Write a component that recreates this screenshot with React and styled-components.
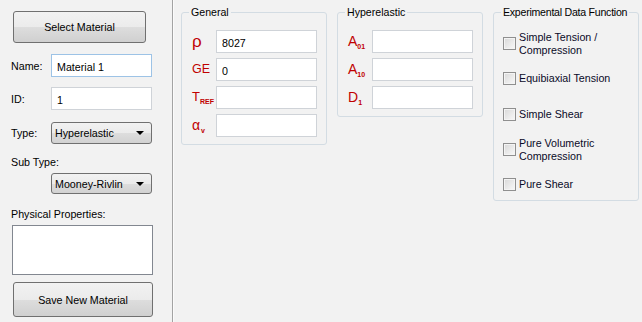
import React from 'react';
import styled, { createGlobalStyle } from 'styled-components';

const GlobalStyle = createGlobalStyle`
	html, body {
		margin: 0;
		padding: 0;
		background: #f2f2f2;
	}
	body {
		font-family: "Liberation Sans", Arial, sans-serif;
		font-size: 10.7px;
		color: #000;
	}
`;

const Window = styled.div`
	display: flex;
	width: 642px;
	height: 322px;
	background: #f2f2f2;
	overflow: hidden;
`;

const Sidebar = styled.div`
	display: flex;
	flex-direction: column;
	width: 173px;
	flex-shrink: 0;
	border-right: 1px solid #a3a3a3;
	box-shadow: 1px 0 0 #fbfbfb;
	box-sizing: border-box;
	padding-top: 11px;
`;

const Button = styled.button`
	width: ${({ wide }) => (wide ? '140px' : '133px')};
	height: ${({ wide }) => (wide ? '35px' : '32px')};
	margin-left: 13px;
	margin-top: ${({ top }) => top || 0}px;
	border: 1px solid #707070;
	border-radius: 3px;
	background: linear-gradient(#f2f2f2 0%, #ebebeb 50%, #dddddd 51%, #d0d0d0 100%);
	font-family: inherit;
	font-size: 10.7px;
	color: #000;
	padding: 0;
`;

const FieldRow = styled.div`
	display: flex;
	align-items: center;
	margin-top: ${({ top }) => top}px;
`;

const SideLabel = styled.span`
	width: 40px;
	padding-left: 11px;
	flex-shrink: 0;
`;

const TextBox = styled.input`
	box-sizing: border-box;
	width: 101px;
	height: 23px;
	border: 1px solid ${({ focused }) => (focused ? '#9dc3e6' : '#cfd3d8')};
	background: #fff;
	font-family: inherit;
	font-size: 10.7px;
	color: #000;
	padding: 2px 5px 0;
	margin: 0;
	outline: none;
`;

const Combo = styled.div`
	box-sizing: border-box;
	display: flex;
	align-items: center;
	justify-content: space-between;
	width: 101px;
	height: ${({ h }) => h || 22}px;
	margin-left: ${({ left }) => left || 0}px;
	margin-top: ${({ top }) => top || 0}px;
	border: 1px solid #707070;
	border-radius: 3px;
	background: linear-gradient(#f2f2f2 0%, #ebebeb 50%, #dddddd 51%, #d2d2d2 100%);
	padding: 0 7px 0 3px;
`;

const Arrow = styled.span`
	width: 0;
	height: 0;
	border-left: 4px solid transparent;
	border-right: 4px solid transparent;
	border-top: 4px solid #000;
`;

const PlainLabel = styled.div`
	padding-left: 11px;
	margin-top: ${({ top }) => top}px;
`;

const TextArea = styled.div`
	box-sizing: border-box;
	width: 141px;
	height: 50px;
	margin: 5px 0 0 12px;
	border: 1px solid #828790;
	background: #fff;
`;

const Main = styled.div`
	display: flex;
	align-items: flex-start;
	gap: 10px;
	padding: 5px 0 0 8px;
`;

const Group = styled.fieldset`
	box-sizing: border-box;
	width: 146px;
	height: ${({ h }) => h}px;
	margin: 0;
	padding: 11px 9px 0 9px;
	border: 1px solid #d3dce3;
	border-radius: 3px;
	min-width: 0;
`;

const Legend = styled.legend`
	padding: 1px 2px 0;
	margin-left: -2px;
	line-height: 13px;
	font-weight: normal;
	font-size: 10.6px;
	white-space: nowrap;
	letter-spacing: ${({ tight }) => (tight ? '-0.25px' : '0')};
`;

const PropRows = styled.div`
	display: flex;
	flex-direction: column;
	gap: 5px;
`;

const PropRow = styled.div`
	display: flex;
	align-items: center;
	justify-content: space-between;
`;

const Symbol = styled.span`
	color: #c00000;
	font-size: ${({ size }) => size || 12}px;
	line-height: 1;
	white-space: nowrap;
	padding-left: 1px;
`;

const Sub = styled.span`
	font-size: 7px;
	font-weight: bold;
	vertical-align: -3px;
	margin-left: ${({ gap }) => gap || 0}px;
`;

const CheckList = styled.div`
	display: flex;
	flex-direction: column;
	margin-top: -4px;
`;

const CheckRow = styled.label`
	display: flex;
	align-items: center;
	height: 35.3px;
	line-height: 13px;
	color: #0a0a28;
`;

const Box = styled.span`
	box-sizing: border-box;
	width: 13px;
	height: 13px;
	flex-shrink: 0;
	margin-right: 3px;
	border: 1px solid #8f8f8f;
	background: linear-gradient(135deg, #d8d8d8 0%, #ececec 60%, #f8f8f8 100%);
	box-shadow: inset 0 0 0 1px #f4f4f4;
`;

const general = [
	{ key: 'rho', symbol: <Symbol size={17}>ρ</Symbol>, value: '8027' },
	{ key: 'ge', symbol: <Symbol size={12.5}>GE</Symbol>, value: '0' },
	{ key: 'tref', symbol: <Symbol size={13}>T<Sub>REF</Sub></Symbol>, value: '' },
	{ key: 'alpha', symbol: <Symbol size={14}>α<Sub gap={1}>v</Sub></Symbol>, value: '' },
];

const hyper = [
	{ key: 'a01', symbol: <Symbol size={14}>A<Sub>01</Sub></Symbol> },
	{ key: 'a10', symbol: <Symbol size={14}>A<Sub>10</Sub></Symbol> },
	{ key: 'd1', symbol: <Symbol size={14}>D<Sub>1</Sub></Symbol> },
];

const experiments = [
	['Simple Tension /', 'Compression'],
	['Equibiaxial Tension'],
	['Simple Shear'],
	['Pure Volumetric', 'Compression'],
	['Pure Shear'],
];

export default function App() {
	return (
		<Window>
			<GlobalStyle />
			<Sidebar>
				<Button>Select Material</Button>
				<FieldRow top={11}>
					<SideLabel>Name:</SideLabel>
					<TextBox focused defaultValue="Material 1" />
				</FieldRow>
				<FieldRow top={10}>
					<SideLabel>ID:</SideLabel>
					<TextBox defaultValue="1" />
				</FieldRow>
				<FieldRow top={12}>
					<SideLabel>Type:</SideLabel>
					<Combo>Hyperelastic<Arrow /></Combo>
				</FieldRow>
				<PlainLabel top={12}>Sub Type:</PlainLabel>
				<Combo h={21} left={51} top={5}>Mooney-Rivlin<Arrow /></Combo>
				<PlainLabel top={14}>Physical Properties:</PlainLabel>
				<TextArea />
				<Button wide top={7}>Save New Material</Button>
			</Sidebar>
			<Main>
				<Group h={140}>
					<Legend>General</Legend>
					<PropRows>
						{general.map((row) => (
							<PropRow key={row.key}>
								{row.symbol}
								<TextBox defaultValue={row.value} />
							</PropRow>
						))}
					</PropRows>
				</Group>
				<Group h={112}>
					<Legend>Hyperelastic</Legend>
					<PropRows>
						{hyper.map((row) => (
							<PropRow key={row.key}>
								{row.symbol}
								<TextBox />
							</PropRow>
						))}
					</PropRows>
				</Group>
				<Group h={196}>
					<Legend tight>Experimental Data Function</Legend>
					<CheckList>
						{experiments.map((lines) => (
							<CheckRow key={lines[0]}>
								<Box />
								<span>
									{lines.map((line, i) => (
										<React.Fragment key={line}>
											{i > 0 && <br />}
											{line}
										</React.Fragment>
									))}
								</span>
							</CheckRow>
						))}
					</CheckList>
				</Group>
			</Main>
		</Window>
	);
}
